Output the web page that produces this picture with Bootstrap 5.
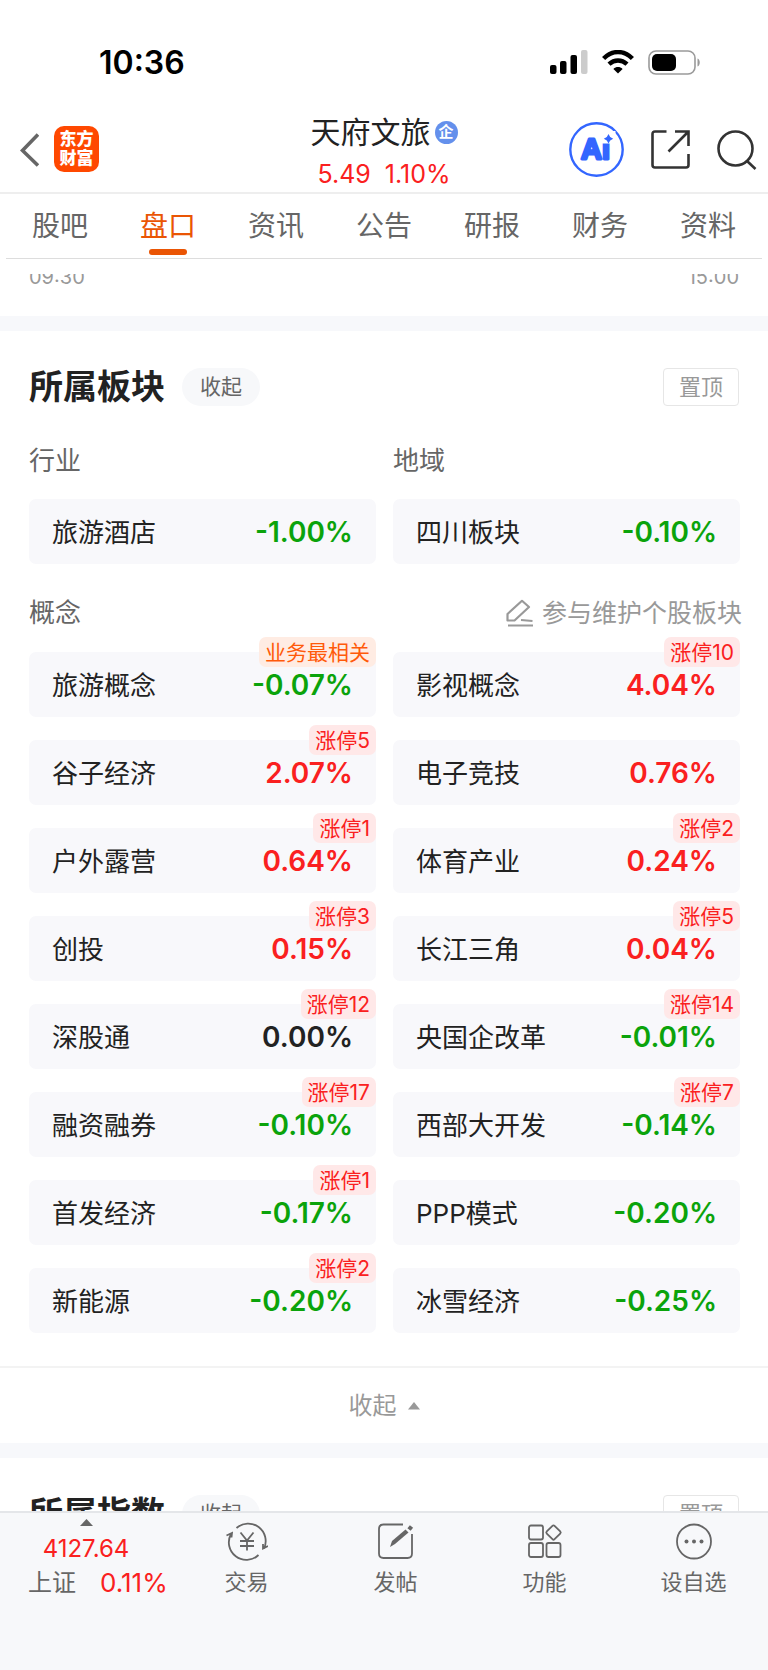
<!DOCTYPE html>
<html lang="zh-CN">
<head>
<meta charset="utf-8">
<meta name="viewport" content="width=device-width, initial-scale=1">
<title>天府文旅 - 盘口</title>
<link href="https://cdn.jsdelivr.net/npm/bootstrap@5.3.0/dist/css/bootstrap.min.css" rel="stylesheet">
<style>
  :root { --up: #fa2020; --down: #0ba30b; --brand: #ea5504; --soft: #f7f8fb; --ink: #222; --mid: #666; --pale: #999; }
  body { font-family: Inter, "Noto Sans CJK SC", sans-serif; color: var(--ink); background: #fff; }
  a { color: inherit; text-decoration: none; }
  button { font-family: inherit; }
  svg { display: block; flex: none; }
  .up { color: var(--up); }
  .down { color: var(--down); }

  .status-bar { padding: 42px 67px 0 99px; height: 100px; }
  .clock { font-size: 32px; font-weight: 600; line-height: 42px; color: #000; }
  .status-icons { gap: 14px; height: 42px; }

  .title-bar { display: grid; grid-template-columns: 1fr auto 1fr; height: 94px; padding: 6px 11px 0; border-bottom: 2px solid #eee; }
  .icon-btn { padding: 0; border: 0; background: none; color: #333; }
  .go-back { padding: 11px 15px 0 9px; }
  .logo-tile { width: 45px; height: 46px; border-radius: 10px; background: #ff4800; color: #fff; font-size: 17px; line-height: 19px; font-weight: 900; text-align: center; padding: 4px 5px; }
  .stock-name { font-size: 30px; line-height: 36px; font-weight: 400; }
  .ent-mark { width: 23px; height: 23px; border-radius: 50%; background: #6490ec; color: #fff; font-size: 15px; line-height: 22px; font-weight: 700; text-align: center; }
  .quote { font-size: 25px; line-height: 32px; gap: 14px; margin-top: 8px; }
  .actions { gap: 27px; }

  .tabs { margin: 0 6px; border-bottom: 1px solid #ddd; }
  .tabs a { flex: 1 1 0; height: 64px; font-size: 28px; line-height: 65px; text-align: center; color: var(--mid); position: relative; }
  .tabs a.active { color: var(--brand); }
  .tabs a.active::after { content: ""; position: absolute; left: 50%; bottom: 3px; width: 38px; height: 6px; margin-left: -19px; border-radius: 3px; background: var(--brand); }
  .top-zone { padding-bottom: 15px; }

  main { min-height: 0; overflow: hidden; }
  .axis { font-size: 20px; line-height: 20px; color: var(--pale); margin-top: -7px; padding: 0 29px 29px; }
  .band { height: 15px; background: var(--soft); }
  .sector { padding: 37px 28px 33px 29px; }
  .sector h2 { font-size: 34px; line-height: 38px; font-weight: 700; margin: 0 17px 0 0; }
  .pill { height: 38px; padding: 0 18px; border: 0; border-radius: 19px; background: #f7f8fa; color: var(--mid); font-size: 21px; line-height: 38px; }
  .pin { height: 38px; padding: 0 15px; border: 1px solid #e6e6e6; border-radius: 4px; background: #fff; color: var(--pale); font-size: 22px; line-height: 36px; margin-right: 1px; }
  .duo { display: grid; grid-template-columns: 1fr 1fr; gap: 23px 17px; }
  .group-head { font-size: 26px; line-height: 36px; font-weight: 400; color: var(--mid); margin: 0; }
  .heads { margin-top: 37px; margin-bottom: 20px; }
  .concept-row { margin-top: 31px; margin-bottom: 21px; }
  .help-link { font-size: 25px; line-height: 36px; color: var(--pale); gap: 8px; margin-right: -2px; }
  .tile { height: 65px; padding: 0 23px; border-radius: 7px; background: #f8f8fb; font-size: 26px; line-height: 67px; color: var(--ink); position: relative; }
  .tile b { font-size: 28px; font-weight: 600; }
  .tile i { position: absolute; top: -15px; right: 0; height: 30px; padding: 0 6px; border-radius: 7px; background: #ffe8e8; color: var(--up); font-style: normal; font-size: 21px; line-height: 31px; }
  .tile i.hot { background: #ffece3; color: #ff5a0a; }
  .fold { width: 100%; height: 77px; padding: 0; border: 0; border-top: 2px solid #f3f3f3; background: #fff; color: var(--pale); font-size: 24px; gap: 11px; }

  .dock { height: 159px; border-top: 2px solid #e4e6e9; background: #f7f8fa; color: var(--mid); font-size: 22px; line-height: 30px; }
  .dock-index { flex: 0 0 172px; padding-top: 6px; }
  .dock-index .value { font-size: 24px; line-height: 34px; margin-top: 6px; }
  .dock-index .pair { font-size: 24px; line-height: 34px; padding-left: 28px; gap: 24px; }
  .dock-index .pair .up { font-size: 26px; }
  .dock-item { flex: 1 1 0; padding-top: 8px; gap: 6px; }
</style>
</head>
<body>
<div class="vh-100 d-flex flex-column overflow-hidden">
  <header class="top-zone">
    <div class="status-bar d-flex justify-content-between">
      <div class="clock">10:36</div>
      <div class="status-icons d-flex align-items-start pt-2">
        <svg width="38" height="24" viewBox="0 0 38 24"><rect y="15" width="6.500" height="9" rx="2"/><rect x="10" y="11" width="6.500" height="13" rx="2"/><rect x="20.500" y="5" width="6.500" height="19" rx="2"/><rect x="31" width="6.500" height="24" rx="2" fill="#ccc"/></svg>
        <svg width="32" height="24" viewBox="0 0 32 24" fill="none" stroke="#000" stroke-width="4.400"><path d="M1.600 8.600C10-.2 22-.2 30.400 8.600"/><path d="M7 14.200c5.300-5 12.700-5 18 0"/><path d="M16 23.500l-4.600-4.600c2.600-2.400 6.600-2.400 9.200 0z" fill="#000" stroke="none"/></svg>
        <svg width="53" height="25" viewBox="0 0 53 25"><rect x="1" y="1" width="46" height="23" rx="7" fill="#fff" stroke="#9a9a9a" stroke-width="1.600"/><rect x="4" y="4" width="24" height="17" rx="5"/><path d="M49.500 8.500c3 1 3 7 0 8z" fill="#9a9a9a"/></svg>
      </div>
    </div>
    <div class="title-bar align-items-start">
      <div class="d-flex align-items-start mt-3">
        <button class="icon-btn go-back" type="button" aria-label="返回"><svg width="19" height="34" viewBox="0 0 19 34" fill="none" stroke="#666" stroke-width="3.600"><path d="M18 1.500L2.500 17.500 18 32.500"/></svg></button>
        <a class="logo-tile mt-1" href="#">东方<br>财富</a>
      </div>
      <div class="text-center pt-2">
        <div class="d-flex align-items-center gap-1">
          <h1 class="stock-name m-0">天府文旅</h1><span class="ent-mark">企</span>
        </div>
        <div class="quote up d-flex justify-content-center"><span>5.49</span><span>1.10%</span></div>
      </div>
      <div class="actions d-flex align-items-center justify-content-end mt-3">
        <button class="icon-btn" type="button" aria-label="Ai"><svg width="55" height="55" viewBox="0 0 55 55"><circle cx="27.500" cy="27.500" r="26.200" fill="#fff" stroke="#3366ff" stroke-width="2.400"/><text x="12" y="37" font-family="Liberation Sans" font-weight="700" font-size="29" fill="#3366ff" stroke="#3366ff" stroke-width="2.800" stroke-linejoin="round">Ai</text><path d="M32.500 9h14v12.500h-14z" fill="#fff"/><path d="M39.500 12l1.700 3 3 1.700-3 1.700-1.700 3-1.700-3-3-1.700 3-1.700z" fill="#3366ff"/></svg></button>
        <button class="icon-btn" type="button" aria-label="分享"><svg width="39" height="39" viewBox="0 0 39 39" fill="none" stroke="#333" stroke-width="2.600"><path d="M15.500 1.500H4Q1.500 1.500 1.500 4v31Q1.500 37.500 4 37.500h31q2.500 0 2.500-2.500V24M24 1.500h13.500V16M37 2L17.500 21.500"/></svg></button>
        <button class="icon-btn" type="button" aria-label="搜索"><svg width="40" height="40" viewBox="0 0 40 40" fill="none" stroke="#333" stroke-width="2.600"><circle cx="18.500" cy="18.500" r="17"/><path d="M29.500 30.500l9 8.500"/></svg></button>
      </div>
    </div>
    <nav class="tabs d-flex">
      <a href="#">股吧</a><a href="#" class="active" aria-current="page">盘口</a><a href="#">资讯</a><a href="#">公告</a><a href="#">研报</a><a href="#">财务</a><a href="#">资料</a>
    </nav>
  </header>

  <main class="flex-grow-1">
    <div class="axis d-flex justify-content-between"><span>09:30</span><span>15:00</span></div>
    <div class="band"></div>
    <section class="sector">
      <div class="d-flex align-items-center">
        <h2>所属板块</h2><button class="pill" type="button">收起</button><button class="pin ms-auto" type="button">置顶</button>
      </div>
      <div class="duo heads"><h3 class="group-head">行业</h3><h3 class="group-head">地域</h3></div>
      <div class="duo">
        <a href="#" class="tile d-flex justify-content-between"><span>旅游酒店</span><b class="down">-1.00%</b></a>
        <a href="#" class="tile d-flex justify-content-between"><span>四川板块</span><b class="down">-0.10%</b></a>
      </div>
      <div class="concept-row d-flex justify-content-between">
        <h3 class="group-head">概念</h3>
        <a href="#" class="help-link d-flex align-items-center"><svg width="28" height="28" viewBox="0 0 28 28" fill="none" stroke="#999" stroke-width="2.200" stroke-linejoin="round"><path d="M1.500 21.500v-6.500L16 1.800l7 6.200L8.500 21.500zM15 21l11.500 1M2 26.500h25"/></svg><span>参与维护个股板块</span></a>
      </div>
      <div class="duo">
        <a href="#" class="tile d-flex justify-content-between"><span>旅游概念</span><b class="down">-0.07%</b><i class="hot">业务最相关</i></a>
        <a href="#" class="tile d-flex justify-content-between"><span>影视概念</span><b class="up">4.04%</b><i>涨停10</i></a>
        <a href="#" class="tile d-flex justify-content-between"><span>谷子经济</span><b class="up">2.07%</b><i>涨停5</i></a>
        <a href="#" class="tile d-flex justify-content-between"><span>电子竞技</span><b class="up">0.76%</b></a>
        <a href="#" class="tile d-flex justify-content-between"><span>户外露营</span><b class="up">0.64%</b><i>涨停1</i></a>
        <a href="#" class="tile d-flex justify-content-between"><span>体育产业</span><b class="up">0.24%</b><i>涨停2</i></a>
        <a href="#" class="tile d-flex justify-content-between"><span>创投</span><b class="up">0.15%</b><i>涨停3</i></a>
        <a href="#" class="tile d-flex justify-content-between"><span>长江三角</span><b class="up">0.04%</b><i>涨停5</i></a>
        <a href="#" class="tile d-flex justify-content-between"><span>深股通</span><b>0.00%</b><i>涨停12</i></a>
        <a href="#" class="tile d-flex justify-content-between"><span>央国企改革</span><b class="down">-0.01%</b><i>涨停14</i></a>
        <a href="#" class="tile d-flex justify-content-between"><span>融资融券</span><b class="down">-0.10%</b><i>涨停17</i></a>
        <a href="#" class="tile d-flex justify-content-between"><span>西部大开发</span><b class="down">-0.14%</b><i>涨停7</i></a>
        <a href="#" class="tile d-flex justify-content-between"><span>首发经济</span><b class="down">-0.17%</b><i>涨停1</i></a>
        <a href="#" class="tile d-flex justify-content-between"><span>PPP模式</span><b class="down">-0.20%</b></a>
        <a href="#" class="tile d-flex justify-content-between"><span>新能源</span><b class="down">-0.20%</b><i>涨停2</i></a>
        <a href="#" class="tile d-flex justify-content-between"><span>冰雪经济</span><b class="down">-0.25%</b></a>
      </div>
    </section>
    <button class="fold d-flex align-items-center justify-content-center" type="button"><span>收起</span><svg width="12" height="8" viewBox="0 0 12 8" fill="#999"><path d="M6 0l6 7.500H0z"/></svg></button>
    <div class="band"></div>
    <section class="sector">
      <div class="d-flex align-items-center">
        <h2>所属指数</h2><button class="pill" type="button">收起</button><button class="pin ms-auto" type="button">置顶</button>
      </div>
    </section>
  </main>

  <nav class="dock d-flex flex-shrink-0">
    <a href="#" class="dock-index">
      <svg class="mx-auto" width="13" height="7" viewBox="0 0 13 7" fill="#666"><path d="M6.500 0L13 7H0z"/></svg>
      <div class="value up text-center">4127.64</div>
      <div class="pair d-flex"><span>上证</span><span class="up">0.11%</span></div>
    </a>
    <a href="#" class="dock-item d-flex flex-column align-items-center">
      <svg width="42" height="40" viewBox="0 0 42 40" fill="none" stroke="#666" stroke-width="1.800"><path d="M10.500 7A17.500 17.500 0 0 1 38 27.500M42 25l-5 2.500V23M32.500 34A17.500 17.500 0 0 1 5 13M.5 14.500l5.500-2.500-.5 4.500"/><path d="M14.500 11.500l6.500 8 6.500-8M14 20h14M14 25h14M21 19.500v10"/></svg>
      <span>交易</span>
    </a>
    <a href="#" class="dock-item d-flex flex-column align-items-center">
      <svg width="40" height="40" viewBox="0 0 40 40" fill="none" stroke="#666" stroke-width="1.800"><path d="M27 3.500H7.500Q3 3.500 3 8v24.500Q3 37 7.500 37h24q4.500 0 4.500-4.500V13"/><path d="M14 26l2-6L29.500 8.500l3 3L19 23z" fill="#666" stroke="none"/><path d="M33 8.500L35.500 5.500" stroke-width="4.200"/></svg>
      <span>发帖</span>
    </a>
    <a href="#" class="dock-item d-flex flex-column align-items-center">
      <svg width="40" height="40" viewBox="0 0 40 40" fill="none" stroke="#666" stroke-width="1.800"><rect x="4" y="4.500" width="14" height="14" rx="2"/><rect x="4" y="22" width="14" height="14" rx="2"/><rect x="21.500" y="22" width="14" height="14" rx="2"/><rect x="23" y="6" width="11" height="11" rx="1.500" transform="rotate(45 28.500 11.500)"/></svg>
      <span>功能</span>
    </a>
    <a href="#" class="dock-item d-flex flex-column align-items-center">
      <svg width="40" height="40" viewBox="0 0 40 40" fill="#666"><circle cx="20" cy="20.500" r="17" fill="none" stroke="#666" stroke-width="1.800"/><circle cx="12.500" cy="20.500" r="2"/><circle cx="20" cy="20.500" r="2"/><circle cx="27.500" cy="20.500" r="2"/></svg>
      <span>设自选</span>
    </a>
  </nav>
</div>
<script src="https://cdn.jsdelivr.net/npm/bootstrap@5.3.0/dist/js/bootstrap.bundle.min.js"></script>
</body>
</html>
